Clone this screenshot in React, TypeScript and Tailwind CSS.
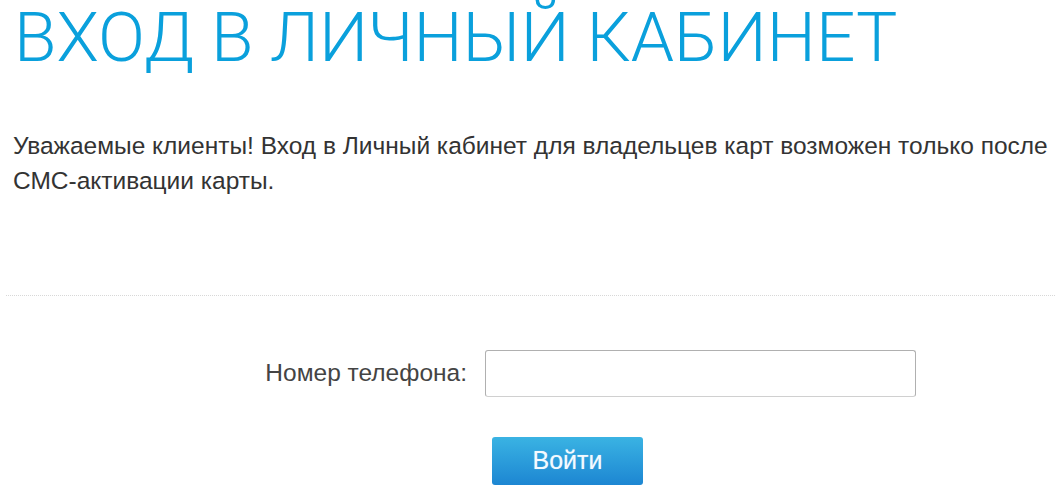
import React from "react";

export default function App() {
  return (
    <div className="w-[1055px] h-[498px] bg-white overflow-hidden" style={{ fontFamily: '"Liberation Sans", Arial, sans-serif' }}>
      <div className="pl-[13px]">
        <h1
          className="text-[69.3px] leading-[76px] font-light text-[#0aa0dc] pl-[1px]"
          style={{ fontFamily: 'Roboto, "Noto Sans", sans-serif' }}
        >
          ВХОД В ЛИЧНЫЙ КАБИНЕТ
        </h1>
        <p className="mt-[52px] text-[24.5px] leading-[35px] text-[#333]">
          Уважаемые клиенты! Вход в Личный кабинет для владельцев карт возможен только после СМС-активации карты.
        </p>
      </div>
      <div className="ml-[6px] mt-[97px] border-t border-dotted border-[#d8d8d8]" />
      <div className="mt-[54px] flex items-center">
        <label className="w-[467px] text-right text-[24.5px] text-[#444]">Номер телефона:</label>
        <input
          type="text"
          className="ml-[18px] w-[431px] h-[47px] rounded-[3px] border border-[#b0b0b0] border-b-[#d0d0d0] outline-none"
        />
      </div>
      <div className="mt-[40px] pl-[492px]">
        <button className="w-[151px] h-[48px] rounded-[3px] text-[#f4faff] text-[25px] bg-gradient-to-b from-[#3ab3e3] to-[#1d86d2] [text-shadow:0_0_1px_rgba(255,255,255,0.5)]">
          Войти
        </button>
      </div>
    </div>
  );
}
